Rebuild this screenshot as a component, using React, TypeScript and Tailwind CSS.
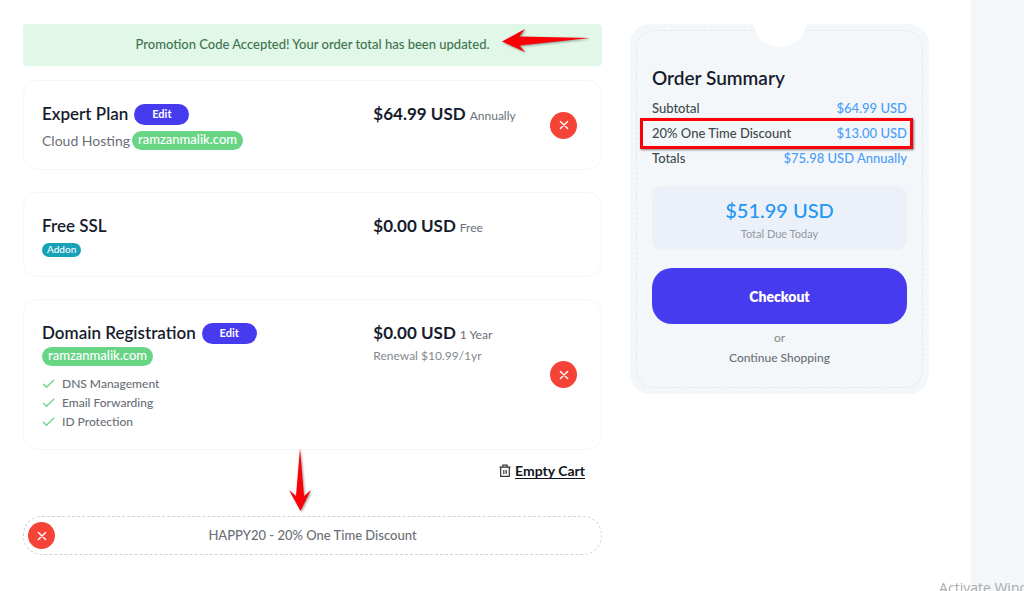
import type { ReactNode } from "react";

function Cross() {
  return (
    <svg viewBox="0 0 10 10" className="size-[10px]" fill="none" stroke="white" strokeWidth="1.4" strokeLinecap="round" aria-hidden="true">
      <path d="M1.4 1.4 8.6 8.6M8.6 1.4 1.4 8.6" />
    </svg>
  );
}

function RemoveButton({ label }: { label: string }) {
  return (
    <button type="button" aria-label={label} className="flex size-[27px] shrink-0 items-center justify-center rounded-full bg-[#f64337]">
      <Cross />
    </button>
  );
}

function EditButton() {
  return (
    <button type="button" className="h-[21px] w-[55px] rounded-full bg-[#473bf0] pb-px text-[11px] leading-[20px] font-bold text-white">
      Edit
    </button>
  );
}

function DomainBadge() {
  return (
    <span className="flex h-[19px] items-center rounded-full bg-[#68d585] px-1.5 pb-px text-[13px] font-medium text-white">
      ramzanmalik.com
    </span>
  );
}

interface ItemProps {
  title: string;
  price: string;
  cycle: string;
  renewal?: string;
  editable?: boolean;
  removable?: boolean;
  children: ReactNode;
}

function CartItem({ title, price, cycle, renewal, editable, removable, children }: ItemProps) {
  return (
    <article className="flex items-center rounded-[14px] border border-[#f5f6f7] pt-5 pr-6 pb-4 pl-[18px]">
      <div className="grid flex-1 grid-cols-[332fr_177fr] items-start">
        <div>
          <div className="flex h-[26px] items-center gap-1.5">
            <h2 className="text-[17px] font-semibold text-[#161c2d]">{title}</h2>
            {editable && <EditButton />}
          </div>
          {children}
        </div>
        <div>
          <p className="flex h-[26px] items-baseline gap-1 leading-[26px]">
            <strong className="text-[17px] font-bold text-[#161c2d]">{price}</strong>
            <span className="text-[12px] text-[#6a6f78]">{cycle}</span>
          </p>
          {renewal && <p className="text-[12px] leading-[20px] text-[#85888d]">{renewal}</p>}
        </div>
      </div>
      <div className="-mt-1 w-[27px]">{removable && <RemoveButton label={`Remove ${title}`} />}</div>
    </article>
  );
}

function SummaryRow({ label, value, marked }: { label: string; value: string; marked?: boolean }) {
  return (
    <div className="relative flex h-[25px] items-center justify-between">
      <dt className="text-[13px] font-medium text-[#3f4a4c]">{label}</dt>
      <dd className="text-[13px] font-medium text-[#4a9df8]">{value}</dd>
      {marked && (
        <span className="absolute -top-[3px] -right-[6px] -bottom-[3px] -left-[12px] border-3 border-[#fb0007] shadow-[1px_1px_2px_rgba(0,0,0,0.5)]" />
      )}
    </div>
  );
}

export default function App() {
  const features = ["DNS Management", "Email Forwarding", "ID Protection"];
  return (
    <div className="relative flex min-h-screen overflow-hidden bg-white font-['Lato',sans-serif]">
      <main className="flex flex-1 items-start gap-7 pt-6 pr-[42px] pb-9 pl-[23px]">
        <section className="flex-1">
          <div role="status" className="relative mb-[14px] flex h-[42px] items-center justify-center rounded-[4px] bg-[#e1f7e7] text-[13px] font-medium text-[#3f7350]">
            Promotion Code Accepted! Your order total has been updated.
            <svg viewBox="0 0 90 28" className="absolute top-[3px] right-[11px] h-7 w-[90px] drop-shadow-[1px_1px_1px_rgba(0,0,0,0.4)]" aria-hidden="true">
              <path d="M1 14.5 24 2 18.5 9.5 89 11 18.5 18.5 24 25Z" fill="#fb0007" />
            </svg>
          </div>

          <div className="flex flex-col gap-[22px]">
            <CartItem title="Expert Plan" price="$64.99 USD" cycle="Annually" editable removable>
              <div className="flex h-[26px] items-center gap-0.5 text-[14px] text-[#6a6f78]">
                Cloud Hosting <DomainBadge />
              </div>
            </CartItem>

            <CartItem title="Free SSL" price="$0.00 USD" cycle="Free">
              <div className="flex h-[21px] items-center">
                <span className="flex h-[14px] items-center rounded-full bg-[#17a2b8] px-[5px] text-[10px] font-medium text-white">Addon</span>
              </div>
            </CartItem>

            <CartItem title="Domain Registration" price="$0.00 USD" cycle="1 Year" renewal="Renewal $10.99/1yr" editable removable>
              <div className="flex h-[20px] items-center">
                <DomainBadge />
              </div>
              <ul className="pt-2 pb-0.5">
                {features.map((feature) => (
                  <li key={feature} className="flex h-[19px] items-center gap-[7px] text-[12px] font-medium text-[#6a6f78]">
                    <svg viewBox="0 0 13 10" className="h-[10px] w-[13px]" fill="none" stroke="#68d585" strokeWidth="1.3" strokeLinecap="round" strokeLinejoin="round" aria-hidden="true">
                      <path d="M1.5 5.3 4.5 8.2 11.7 1.3" />
                    </svg>
                    {feature}
                  </li>
                ))}
              </ul>
            </CartItem>
          </div>

          <div className="mt-[10px] flex justify-end pr-[17px]">
            <button type="button" className="flex h-[21px] items-center gap-1 text-[14px] font-bold text-[#11151c]">
              <svg viewBox="0 0 12 14" className="h-[14px] w-3" fill="none" stroke="#333" strokeWidth="1.2" strokeLinejoin="round" aria-hidden="true">
                <path d="M.5 3.2H11.5M3.8 3V1.2H8.2V3M1.7 3.4V12.4H10.3V3.4M4.8 6V10M7.2 6V10" />
              </svg>
              <span className="underline underline-offset-2">Empty Cart</span>
            </button>
          </div>

          <div className="relative mt-[35px] flex h-[39px] items-center rounded-[19px] border border-dashed border-[#d0d2d4] px-1">
            <RemoveButton label="Remove promotion code" />
            <p className="flex-1 pr-[27px] text-center text-[13px] font-medium text-[#6a6f78]">HAPPY20 - 20% One Time Discount</p>
            <svg viewBox="0 0 24 66" className="absolute -top-[70px] left-[264px] h-[66px] w-6 drop-shadow-[1px_1px_1px_rgba(0,0,0,0.4)]" aria-hidden="true">
              <path d="M12 1 16 49 23 43 12.5 64 1 43 8 49Z" fill="#fb0007" />
            </svg>
          </div>
        </section>

        <aside className="relative w-[299px] shrink-0 overflow-hidden rounded-[20px] bg-[#f4f7fa] p-1.5">
          <div className="rounded-[18px] border border-dashed border-[#e3e7ea] px-[15px] pt-[33px] pb-[19px]">
            <h2 className="h-8 text-[19px] leading-[28px] font-semibold text-[#161c2d]">Order Summary</h2>
            <dl>
              <SummaryRow label="Subtotal" value="$64.99 USD" />
              <SummaryRow label="20% One Time Discount" value="$13.00 USD" marked />
              <SummaryRow label="Totals" value="$75.98 USD Annually" />
            </dl>
            <div className="mt-[15px] flex h-[64px] flex-col items-center rounded-[10px] bg-[#ecf1f9] pt-2.5">
              <strong className="text-[20px] leading-[28px] font-medium text-[#2196f3]">$51.99 USD</strong>
              <span className="text-[11px] leading-[20px] text-[#92979d]">Total Due Today</span>
            </div>
            <button type="button" className="mt-[18px] block h-14 w-full rounded-[20px] bg-[#473bf0] text-[14px] font-extrabold text-white">
              Checkout
            </button>
            <p className="mt-1 text-center text-[12px] leading-[20px] text-[#85888d]">or</p>
            <a href="#shop" className="block text-center text-[12px] leading-[20px] font-medium text-[#6a6f78]">Continue Shopping</a>
          </div>
          <span className="absolute -top-[31px] left-1/2 size-[54px] -translate-x-1/2 rounded-full bg-white" />
        </aside>
      </main>
      <div className="w-[53px] shrink-0 bg-[#f4f7fa]" />
      <p className="absolute -right-[30px] -bottom-[7px] text-[14px] leading-[20px] whitespace-nowrap text-[#a9abad] font-['Open_Sans',sans-serif]">Activate Windows</p>
    </div>
  );
}
